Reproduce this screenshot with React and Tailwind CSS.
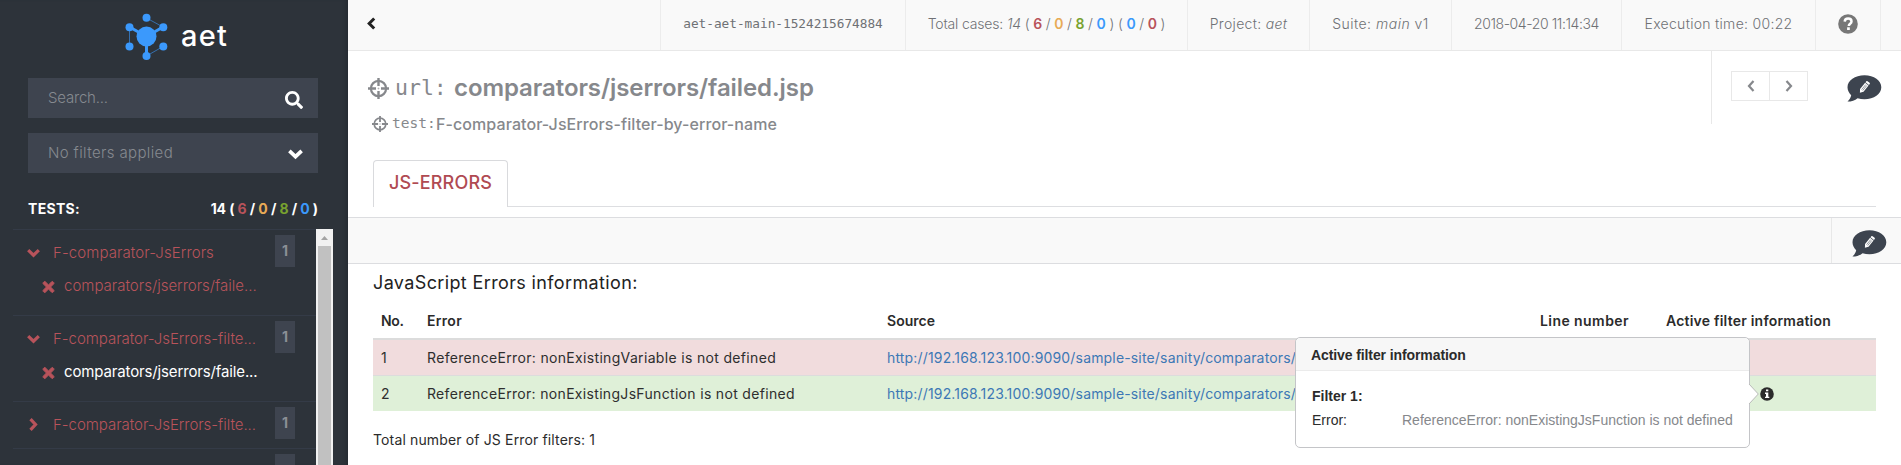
import React from "react";
import { FaTimes, FaSearch } from "react-icons/fa";

function Logo() {
  return (
    <svg className="h-[56px] w-[56px]" viewBox="118 8 56 56" fill="#3b99fc" stroke="#3b99fc">
      <path d="M129.5 27v19.500M146.500 18l16.500 9M146.500 56l16.500-9.500" strokeWidth="0.8" fill="none" opacity="0.75" />
      <path d="M129.500 27l17 9.500l16.500-9.500M146.500 36.500v19.500" strokeWidth="3" fill="none" />
      <circle cx="146.500" cy="36.500" r="10" stroke="none" />
      <g stroke="none">
        <circle cx="146.500" cy="17.700" r="4" />
        <circle cx="163.300" cy="27.300" r="4" />
        <circle cx="163.300" cy="46.500" r="4" />
        <circle cx="146.500" cy="56" r="4" />
        <circle cx="129.500" cy="46.500" r="4" />
        <circle cx="129.500" cy="27.300" r="4" />
      </g>
    </svg>
  );
}

function ChevronDown({ className }) {
  return (
    <svg className={className} viewBox="0 0 13 13" fill="none" stroke="currentColor" strokeWidth="3.200">
      <path d="M1.200 4.200l5.300 5l5.300-5" />
    </svg>
  );
}

function ChevronRight({ className }) {
  return (
    <svg className={className} viewBox="0 0 13 13" fill="none" stroke="currentColor" strokeWidth="3.200">
      <path d="M3.500 1.200l5 5.300l-5 5.300" />
    </svg>
  );
}

function ChevronLeft({ className }) {
  return (
    <svg className={className} viewBox="0 0 13 13" fill="none" stroke="currentColor" strokeWidth="3">
      <path d="M8.200 1.500l-5 5l5 5" />
    </svg>
  );
}

function Crosshair({ className }) {
  return (
    <svg className={className} viewBox="0 0 21 21" fill="none" stroke="#86888c">
      <circle cx="10.500" cy="10.500" r="7.600" strokeWidth="2.200" />
      <path d="M10.500 0v8M10.500 13v8M0 10.500h8M13 10.500h8" strokeWidth="2.400" />
      <path d="M10.500 9.500v2M9.500 10.500h2" strokeWidth="0.800" opacity="0.500" />
    </svg>
  );
}

function NoteBubble() {
  return (
    <svg className="h-[27px] w-[35px] shrink-0" viewBox="0 0 35 27">
      <path d="M17.500 0.300C27 0.300 34.300 5.500 34.300 12.300S27 24.300 17.500 24.300c-2.500 0-4.800-.4-6.900-1.100C8 25.400 4.500 26.600.5 26.600c1.700-1.700 3.300-4 3.700-6.300C2 18.100.5 15.400.5 12.300.5 5.500 8 .3 17.500.3z" fill="#3d444f" />
      <g transform="translate(17.300 12.300) rotate(39)">
        <path d="M-2.200-4h4.400v8l-2.200 3l-2.200-3z" fill="#fff" />
        <path d="M-2.200-4.700v-1.200q0-.9.9-.9h2.600q.9 0 .9.900v1.200z" fill="#fff" />
        <path d="M-.6-3v6.500M.8-3v6.500" stroke="#3d444f" strokeWidth="0.500" />
      </g>
    </svg>
  );
}

function QuestionIcon() {
  return (
    <svg className="h-5 w-5" viewBox="0 0 20 20">
      <circle cx="10" cy="10" r="9.800" fill="#777" />
      <path d="M6.700 7.600C6.800 5.500 8.200 4.500 10.100 4.500c2 0 3.400 1.100 3.400 2.900 0 2.300-2.700 2.400-2.700 4.500" fill="none" stroke="#fff" strokeWidth="2.500" />
      <rect x="9.100" y="13.300" width="2.700" height="2.700" fill="#fff" />
    </svg>
  );
}

function InfoIcon() {
  return (
    <svg className="block h-[14px] w-[14px]" viewBox="0 0 14 14">
      <circle cx="7" cy="7" r="6.800" fill="#2b2b2b" />
      <path d="M6 2.400h2.300v1.900H6zM5 5.500h3.300v4.200h1v1.400H5V9.700h1V6.900H5z" fill="#fff" />
    </svg>
  );
}

const Red = ({ children }) => <span className="text-[#b8535b]">{children}</span>;
const Orange = ({ children }) => <span className="text-[#e8ab56]">{children}</span>;
const Green = ({ children }) => <span className="text-[#78a22f]">{children}</span>;
const Blue = ({ children }) => <span className="text-[#3b99fc]">{children}</span>;

function TestItem({ name, nameClass, url, active }) {
  const Chevron = url ? ChevronDown : ChevronRight;
  return (
    <li className={`flex shrink-0 flex-col border-t border-[#343b47] ${url ? "h-[86px]" : "h-[47px]"}`}>
      <div className="mt-[5px] flex h-8 items-start text-[#b8535b]">
        <Chevron className="mt-[11px] ml-3.5 h-[13px] w-[13px]" />
        <span className={`ml-[13px] w-[222px] whitespace-pre text-[15px] leading-[35px] font-light ${nameClass}`}>{name}</span>
        <span className="h-8 w-5 bg-[#3e444f] text-center text-sm leading-8 font-bold text-[#8b8f96]">1</span>
      </div>
      {url && (
        <div className="mt-[3px] flex h-8 items-center pl-[29px]">
          <FaTimes className="mt-px h-[16px] w-[13px] text-[#b8535b]" stroke="currentColor" strokeWidth="30" />
          <span className={`ml-[9px] whitespace-pre text-[15px] ${active ? "tracking-[-0.140px] text-white" : "font-light tracking-[0.010px] text-[#b8535b]"}`}>{url}</span>
        </div>
      )}
    </li>
  );
}

function Sidebar() {
  return (
    <aside className="flex h-full w-[348px] shrink-0 flex-col bg-[#2d333a] shadow-[inset_-4px_0_4px_-3px_#22272e]">
      <div className="flex h-[78px] items-start pt-2 pl-[118px]">
        <Logo />
        <span className="ml-[7px] pt-[7px] text-[29px] leading-[42px] font-medium tracking-[1.200px] text-white">aet</span>
      </div>
      <div className="ml-7 flex h-10 w-[290px] items-center justify-between bg-[#3e444f] pr-[15px] pl-5">
        <span className="text-[15px] font-light tracking-[-0.200px] text-[#868a90]">Search...</span>
        <FaSearch className="mt-[3px] h-[18px] w-[18px] text-white" />
      </div>
      <div className="mt-[15px] ml-7 flex h-10 w-[290px] items-center justify-between bg-[#3e444f] pr-[15px] pl-5">
        <span className="text-[15px] font-light tracking-[0.370px] text-[#868a90]">No filters applied</span>
        <ChevronDown className="h-[15px] w-[15px] text-white" />
      </div>
      <div className="ml-7 flex h-14 w-[290px] items-center justify-between pt-[15px] text-sm font-bold text-white">
        <span className="tracking-[0.300px]">TESTS:</span>
        <span className="tracking-[-0.100px]">
          14 ( <Red>6</Red> / <Orange>0</Orange> / <Green>8</Green> / <Blue>0</Blue> )
        </span>
      </div>
      <div className="flex min-h-0 flex-1 overflow-hidden pl-[13px]">
        <ul className="flex w-[303px] flex-col overflow-hidden">
          <TestItem name="F-comparator-JsErrors" nameClass="tracking-[0.090px]" url="comparators/jserrors/faile..." />
          <TestItem name="F-comparator-JsErrors-filte..." nameClass="tracking-[-0.035px]" url="comparators/jserrors/faile..." active />
          <TestItem name="F-comparator-JsErrors-filte..." nameClass="tracking-[-0.035px]" />
          <li className="flex h-[17px] shrink-0 border-t border-[#343b47] pt-[5px] pl-[262px]">
            <span className="w-5 bg-[#3e444f]" />
          </li>
        </ul>
        <div className="flex w-[17px] flex-col items-center bg-[#f1f1f1]">
          <svg className="h-[17px] w-[17px] shrink-0" viewBox="0 0 17 17"><path d="M5 11l3.500-4l3.500 4z" fill="#a3a3a3" /></svg>
          <div className="w-[13px] flex-1 bg-[#c1c1c1]" />
        </div>
      </div>
    </aside>
  );
}

function Cell({ className, children }) {
  return <div className={`flex h-full shrink-0 items-center justify-center border-l border-[#ececec] pb-0.5 whitespace-pre ${className}`}>{children}</div>;
}

function TopBar() {
  return (
    <header className="flex h-[51px] shrink-0 items-center border-b border-[#e8e8e8] bg-[#f9f9f9] text-sm font-light text-[#6f7175]">
      <div className="flex w-[312px] items-center pb-[3px] pl-[18px]">
        <ChevronLeft className="h-[13px] w-[13px] text-[#222]" />
      </div>
      <Cell className="w-[245px] font-['DejaVu_Sans_Mono'] text-[12.750px] font-normal">aet-aet-main-1524215674884</Cell>
      <Cell className="w-[282px] tracking-[-0.170px]">
        Total cases: <i>14</i> ( <b className="font-semibold"><Red>6</Red></b> / <b className="font-semibold"><Orange>0</Orange></b> / <b className="font-semibold"><Green>8</Green></b> / <b className="font-semibold"><Blue>0</Blue></b> ) ( <b className="font-semibold"><Blue>0</Blue></b> / <b className="font-semibold"><Red>0</Red></b> )
      </Cell>
      <Cell className="w-[122px] tracking-[0.320px]">Project: <i>aet</i></Cell>
      <Cell className="w-[142px] tracking-[0.490px]">Suite: <i>main</i> v1</Cell>
      <Cell className="w-[170px] tracking-[-0.400px]">2018-04-20 11:14:34</Cell>
      <Cell className="w-[194px] tracking-[0.300px]">Execution time: 00:22</Cell>
      <Cell className="w-[65px]"><QuestionIcon /></Cell>
      <Cell className="w-[21px]" />
    </header>
  );
}

function TitleSection() {
  return (
    <section className="flex h-[166px] shrink-0 flex-col">
      <div className="flex h-[108px] justify-between text-[#86888c]">
        <div className="flex flex-col pl-5">
          <div className="mt-[21px] flex h-8 items-center">
            <Crosshair className="h-[21px] w-[21px]" />
            <span className="ml-[6px] w-[59px] font-['DejaVu_Sans_Mono'] text-[21.500px]">url:</span>
            <h1 className="text-2xl font-semibold tracking-[-0.080px]">comparators/jserrors/failed.jsp</h1>
          </div>
          <div className="mt-[8px] flex h-6 items-center pl-1">
            <Crosshair className="mb-px h-[16px] w-[16px]" />
            <span className="ml-[4px] w-[44px] font-['DejaVu_Sans_Mono'] text-[14.500px]">test:</span>
            <h2 className="text-base font-medium tracking-[0.087px]">F-comparator-JsErrors-filter-by-error-name</h2>
          </div>
        </div>
        <div className="flex h-[73px] w-[190px] items-start border-l border-[#e8e8e8] pt-5 pl-[19px]">
          <div className="flex h-[30px] w-[77px] border border-[#e8e8e8] text-[#86888c]">
            <div className="flex w-[38px] items-center justify-center border-r border-[#e8e8e8]">
              <svg className="h-3 w-2" viewBox="0 0 8 12"><path d="M6.500 1L2 6l4.500 5" fill="none" stroke="currentColor" strokeWidth="2.200" /></svg>
            </div>
            <div className="flex flex-1 items-center justify-center">
              <svg className="h-3 w-2" viewBox="0 0 8 12"><path d="M1.500 1L6 6l-4.500 5" fill="none" stroke="currentColor" strokeWidth="2.200" /></svg>
            </div>
          </div>
          <div className="mt-1 ml-[39px]"><NoteBubble /></div>
        </div>
      </div>
      <div className="mx-[25px] flex h-[48px]">
        <div className="mt-px flex h-[47px] w-[135px] items-center justify-center rounded-t border border-b-0 border-[#d9dadd] text-lg font-medium tracking-[0.158px] text-[#b04a52]">
          <span className="-mt-0.5">JS-ERRORS</span>
        </div>
        <div className="flex-1 border-b border-[#dddee1]" />
      </div>
    </section>
  );
}

const TH = "pt-[3px] text-left text-sm font-semibold whitespace-nowrap";
const LINK = "http://192.168.123.100:9090/sample-site/sanity/comparators/";

function ErrorRow({ no, error, errorClass, className, info }) {
  return (
    <div className={`grid grid-cols-[46px_460px_653px_126px_1fr] items-center pl-2 text-sm text-[#2e2e2e] ${className}`}>
      <span>{no}</span>
      <span className={errorClass}>{error}</span>
      <span className="tracking-[0.166px] whitespace-nowrap text-[#3d78b5]">{LINK}</span>
      <span />
      {info ? <span className="justify-self-start pl-[94px]"><InfoIcon /></span> : <span />}
    </div>
  );
}

function Popover() {
  return (
    <div className="absolute top-[73px] left-[947px] h-[111px] w-[455px] rounded-[5px] border border-[#c4c5c8] bg-white font-['Liberation_Sans'] text-sm text-[#2b2b2b]">
      <div className="h-[33px] rounded-t-[5px] border-b border-[#ebebeb] bg-[#f7f7f7] pt-[7px] pl-[15px] leading-5 font-bold tracking-[-0.100px]">Active filter information</div>
      <div className="pt-[13px] pl-4 leading-6">
        <div className="font-bold">Filter 1:</div>
        <div className="flex">
          <span className="w-[90px]">Error:</span>
          <span className="text-[#86888c]">ReferenceError: nonExistingJsFunction is not defined</span>
        </div>
      </div>
      <svg className="absolute top-[45px] left-[452px] h-[22px] w-[11px]" viewBox="0 0 11 22">
        <path d="M0 0L10.300 11L0 22z" fill="#fff" />
        <path d="M1 1l9.300 10L1 21" fill="none" stroke="#b9bbb9" />
      </svg>
    </div>
  );
}

export default function App() {
  return (
    <div className="flex h-[465px] w-[1901px] overflow-hidden bg-white font-['Inter',sans-serif]">
      <Sidebar />
      <main className="flex min-w-0 flex-1 flex-col">
        <TopBar />
        <TitleSection />
        <div className="flex h-[47px] shrink-0 justify-end border-y border-[#dcdde0] bg-[#f9f9f9]">
          <div className="flex w-[70px] items-start border-l border-[#e8e8e8] pt-3 pl-5"><NoteBubble /></div>
        </div>
        <section className="relative flex-1 px-[25px]">
          <h3 className="pt-[3px] pb-0.5 text-lg leading-8 tracking-[0.370px] text-[#222]">JavaScript Errors information:</h3>
          <div className="grid h-[39px] grid-cols-[46px_460px_653px_126px_1fr] items-center border-b-2 border-[#dcdcdc] pl-2 text-[#2b2b2b]">
            <span className={`${TH} tracking-[-0.370px]`}>No.</span>
            <span className={`${TH} tracking-[0.300px]`}>Error</span>
            <span className={`${TH} tracking-[0.020px]`}>Source</span>
            <span className={`${TH} tracking-[0.430px]`}>Line number</span>
            <span className={`${TH} tracking-[0.215px]`}>Active filter information</span>
          </div>
          <ErrorRow no="1" error="ReferenceError: nonExistingVariable is not defined" errorClass="tracking-[0.330px]" className="h-[35px] bg-[#f1dcdd]" />
          <ErrorRow no="2" error="ReferenceError: nonExistingJsFunction is not defined" errorClass="tracking-[0.320px]" className="h-[36px] border-t border-[#dcdcdc] bg-[#dff0d8]" info />
          <p className="pt-[19px] text-sm leading-5 tracking-[0.143px] text-[#2b2b2b]">Total number of JS Error filters: 1</p>
          <Popover />
        </section>
      </main>
    </div>
  );
}
